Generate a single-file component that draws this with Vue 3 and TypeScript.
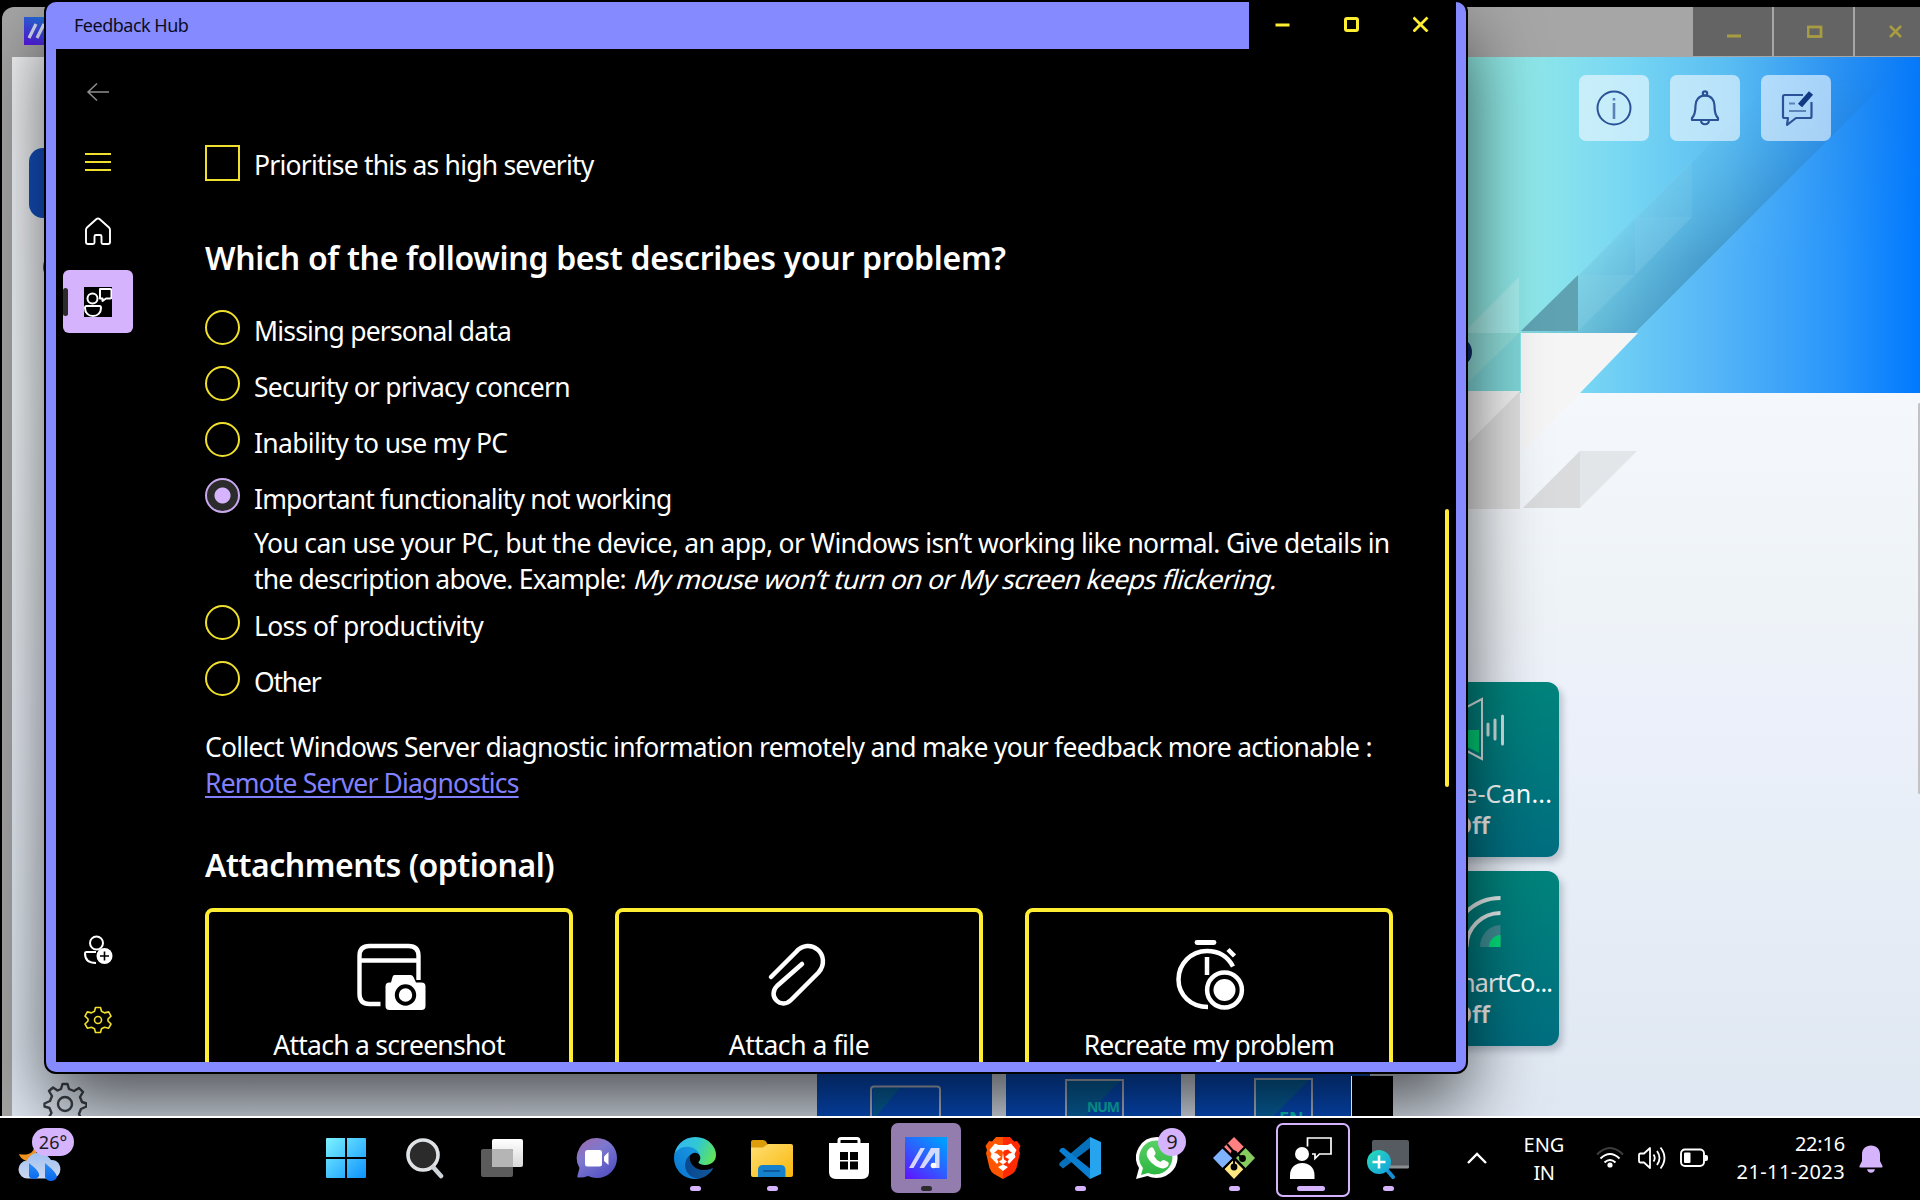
<script setup lang="ts">
import { ref } from 'vue'
import type { Directive } from 'vue'

interface Option {
  id: string
  label: string
  width: number
}

// Spreads the letters of a single line so that it takes the given width.
const vFit: Directive<HTMLElement, number> = {
  mounted(el, { value }) {
    const length = (el.textContent ?? '').length
    const natural = el.offsetWidth
    if (length > 0) el.style.letterSpacing = `${(value - natural) / length}px`
  },
}

const options: Option[] = [
  { id: 'data', label: 'Missing personal data', width: 257 },
  { id: 'security', label: 'Security or privacy concern', width: 316 },
  { id: 'inability', label: 'Inability to use my PC', width: 253 },
  { id: 'important', label: 'Important functionality not working', width: 418 },
  { id: 'loss', label: 'Loss of productivity', width: 229 },
  { id: 'other', label: 'Other', width: 67 },
]
const selected = ref('important')
</script>

<template>
  <div class="desktop">
    <!-- Background application -->
    <section class="app">
      <header class="app-bar">
        <svg class="app-logo" width="42" height="28" viewBox="0 0 42 28">
          <defs><linearGradient id="al" x1="0" y1="1" x2=".6" y2="0"><stop offset="0" stop-color="#5a14e6" /><stop offset="1" stop-color="#1d78d8" /></linearGradient></defs>
          <rect width="42" height="28" fill="url(#al)" />
          <path d="M5 21 12 7M13 21l7-14" stroke="#d6dcf5" stroke-width="3.2" />
        </svg>
        <div class="app-controls">
          <span><svg width="16" height="16" viewBox="0 0 16 16"><path d="M1 12h14" stroke="#a89c42" stroke-width="3" /></svg></span>
          <span><svg width="16" height="16" viewBox="0 0 16 16"><rect x="1" y="3" width="13" height="9.500" fill="none" stroke="#a89c42" stroke-width="2.800" /></svg></span>
          <span><svg width="16" height="16" viewBox="0 0 16 16"><path d="m2 2 11 11m0-11-11 11" stroke="#a89c42" stroke-width="2.600" /></svg></span>
        </div>
      </header>
      <div class="app-body">
        <svg class="art" viewBox="12 57 1908 1059" width="1908" height="1059">
          <defs>
            <linearGradient id="hero" gradientUnits="userSpaceOnUse" x1="1440" y1="0" x2="1920" y2="0">
              <stop offset="0" stop-color="#8ae0d4" /><stop offset=".2" stop-color="#8ee6ea" /><stop offset=".38" stop-color="#78d7f3" />
              <stop offset=".6" stop-color="#5abdf2" /><stop offset=".82" stop-color="#2c93f2" /><stop offset="1" stop-color="#0578fa" />
            </linearGradient>
            <linearGradient id="ray" gradientUnits="userSpaceOnUse" x1="1580" y1="0" x2="1920" y2="0">
              <stop offset="0" stop-color="#79d8f3" /><stop offset=".4" stop-color="#55b5f7" /><stop offset=".75" stop-color="#2a96fb" /><stop offset="1" stop-color="#0079ff" />
            </linearGradient>
            <linearGradient id="shade" gradientUnits="userSpaceOnUse" x1="1650" y1="170" x2="1724" y2="244">
              <stop offset="0" stop-color="#1a5a8c" stop-opacity="0" /><stop offset="1" stop-color="#1a5a8c" stop-opacity=".36" />
            </linearGradient>
            <linearGradient id="rise" gradientUnits="userSpaceOnUse" x1="0" y1="70" x2="0" y2="260">
              <stop offset="0" stop-color="#000" /><stop offset="1" stop-color="#fff" />
            </linearGradient>
            <mask id="rising" maskUnits="userSpaceOnUse" x="1400" y="57" width="520" height="336"><rect x="1400" y="57" width="520" height="336" fill="url(#rise)" /></mask>
          </defs>
          <rect x="1400" y="57" width="520" height="336" fill="url(#hero)" />
          <g mask="url(#rising)">
            <path d="M1521 333 1797 57h114L1635 333z" fill="url(#shade)" />
            <path d="M1635 333 1911 57h9v336h-340z" fill="url(#ray)" />
          </g>
          <path d="M1635 333h285v60h-340z" fill="url(#ray)" />
          <path d="M1519 277v56h-56z" fill="#fff" opacity=".2" />
          <path d="M1400 333h120v58h-120z" fill="#7fd6d8" />
          <path d="M1519 333l-60 58h-59v-58z" fill="#8edcd8" />
          <path d="M1578 275v56h-57z" fill="#5fa3b3" />
          <path d="M1578 275h57l-57 56z" fill="#8bd0e6" opacity=".34" />
          <path d="M1578 275l57-58v58z" fill="#8bd0e6" opacity=".12" />
          <path d="M1635 217h57l-57 58z" fill="#8bd0ea" opacity=".3" />
          <path d="M1692 160v57h-57z" fill="#8bd0ea" opacity=".18" />
          <path d="M1521 333h117l-58 60-59 60z" fill="#f5f5f5" />
          <path d="M1400 391h120v118h-120z" fill="#dedede" />
          <path d="M1400 391h120l-118 118z" fill="#f0f0f0" />
          <path d="M1523 508l57-57v57z" fill="#dadbdd" />
          <path d="M1580 451h57l-57 57z" fill="#e3e6e8" />
          <circle cx="1457" cy="352" r="15" fill="#0a2a66" />
          <rect x="1918" y="403" width="3" height="391" rx="1.500" fill="#c2c2c4" />
        </svg>
        <aside class="app-side">
          <div class="side-active"></div>
          <div class="side-dot"></div>
          <svg class="side-gear" width="44" height="44" viewBox="-22 -22 44 44" fill="none" stroke="#3d4147" stroke-width="2.400" stroke-linejoin="round">
            <path d="M-4-15-2.500-20h5L4-15l5 2 5-3 4 4-3 5 2 5 4.500 1.500v3L16 5l-2 5 2.500 5-4 3.500-5-3-4 2L2 21h-4l-1.500-4-4-2-5 3-4-4 3-5-2-5-5-1.500v-3L-15-3l2-5-3-5 4-3.500 4.500 3z" />
            <circle r="7" />
          </svg>
        </aside>
        <main class="app-main">
          <div class="hero">
            <span class="hero-btn"><svg width="40" height="40" viewBox="0 0 40 40" fill="none" stroke="#2b5296" stroke-width="2"><circle cx="20" cy="20" r="16.500" /><path d="M20 15v16M20 10v2.500" stroke="#5b83b8" stroke-width="2.600" /></svg></span>
            <span class="hero-btn"><svg width="40" height="40" viewBox="0 0 40 40" fill="none" stroke="#2b5296" stroke-width="2.200" stroke-linejoin="round"><circle cx="20" cy="5.500" r="2.200" /><path d="M20 7.500c-6 0-9.500 4.500-9.500 10 0 7-1 10-3.500 12.500V32h26v-2c-2.500-2.500-3.500-5.500-3.500-12.500 0-5.500-3.500-10-9.500-10zM16 32.500c.5 5 7.500 5 8 0" /></svg></span>
            <span class="hero-btn"><svg width="40" height="40" viewBox="0 0 40 40" fill="none" stroke="#2b5296" stroke-width="2.200" stroke-linejoin="round"><path d="M27 7H8.500Q7 7 7 8.500v20Q7 30 8.500 30H12l-1 7 9-7h14q1.500 0 1.500-1.500V14" /><path d="M13 15.500h6M13 23h17" stroke="#5b83b8" /><path d="M24 17.500 35 5" stroke="#123a84" stroke-width="5.500" /></svg></span>
          </div>
          <div class="tiles">
            <div class="tile">
              <svg width="175" height="95" viewBox="0 0 175 95"><path d="M50 35h14l34-18v60L64 59H50z" fill="none" stroke="#d9e6e6" stroke-width="2" /><path d="M64 48h31v23L66 56z" fill="#00cf78" /><path d="M104 42v11M111 38v19M118.500 34v28" stroke="#cfe0e2" stroke-width="3" stroke-linecap="round" /></svg>
              <span v-fit="142" class="tile-name">Noise-Can...</span>
              <b>Off</b>
            </div>
            <div class="tile">
              <svg width="175" height="95" viewBox="0 0 175 95"><path d="M116.500 76H96a20.500 22 0 0 1 20.500-22z" fill="#3f8e95" /><path d="M116.500 76H105a11.500 12 0 0 1 11.500-12z" fill="#00e07a" /><path d="M116.500 42a34 34 0 0 0-34 34M116.500 27a49 49 0 0 0-49 49" fill="none" stroke="#e4ecec" stroke-width="4" /></svg>
              <span v-fit="113" class="tile-name">SmartCo...</span>
              <b>Off</b>
            </div>
          </div>
          <div class="keys">
            <div class="key"><svg width="175" height="60" viewBox="0 0 175 60"><path d="M56 28h27L56 60z" fill="#0766a8" /><rect x="54" y="26.500" width="69" height="50" rx="3" fill="none" stroke="#bac0cc" stroke-width="2" /></svg></div>
            <div class="key"><svg width="175" height="60" viewBox="0 0 175 60"><path d="M60 20h55L60 76z" fill="#0766a8" /><rect x="60" y="20" width="57" height="60" fill="none" stroke="#bac0cc" stroke-width="2" /><text x="81" y="52" textLength="33" class="key-text">NUM</text><text x="81" y="68" class="key-text">LOCK</text></svg></div>
            <div class="key"><svg width="175" height="60" viewBox="0 0 175 60"><path d="M60 19h55L60 75z" fill="#0766a8" /><rect x="60" y="19" width="57" height="60" fill="none" stroke="#bac0cc" stroke-width="2" /><text x="84" y="65" class="key-text key-big">EN</text></svg></div>
          </div>
        </main>
      </div>
    </section>
    <div class="fragment"></div>

    <!-- Feedback Hub -->
    <section class="hub">
      <header class="hub-bar">
        <div class="hub-title"><span v-fit="114">Feedback Hub</span></div>
        <div class="hub-controls">
          <svg width="16" height="16" viewBox="0 0 16 16"><path d="M.5 9h14" stroke="#ffee32" stroke-width="3" /></svg>
          <svg width="16" height="16" viewBox="0 0 16 16"><rect x="1.500" y="2.500" width="12" height="12" rx="1.500" fill="none" stroke="#ffee32" stroke-width="3" /></svg>
          <svg width="16" height="16" viewBox="0 0 16 16"><path d="m.5 1.500 14 14m0-14-14 14" stroke="#ffee32" stroke-width="2.800" /></svg>
        </div>
      </header>
      <div class="hub-body">
        <nav class="nav">
          <span class="nav-item"><svg width="30" height="30" viewBox="0 0 30 30" fill="none" stroke="#8f8f8f" stroke-width="1.500"><path d="M26 15H5M14 6.500 5 15l9 8.500" /></svg></span>
          <span class="nav-item"><svg width="30" height="30" viewBox="0 0 30 30" stroke="#efe02e" stroke-width="1.800"><path d="M2 7h26M2 15h26M2 23h26" /></svg></span>
          <span class="nav-item nav-up"><svg width="30" height="30" viewBox="0 0 30 30" fill="none" stroke="#fff" stroke-width="1.900" stroke-linejoin="round"><path d="M3 14Q3 12.500 4 11.500L13.500 3Q15 1.800 16.500 3L26 11.500q1 1 1 2.500v12q0 2-2 2h-5q-1.500 0-1.500-1.500v-6Q18.500 19 17 19h-4q-1.500 0-1.500 1.500v6Q11.500 28 10 28H5q-2 0-2-2z" /></svg></span>
          <span class="nav-item nav-up"><span class="selected-box"><svg width="28" height="30" viewBox="0 0 28 30" fill="none" stroke="#fff" stroke-width="2"><rect width="28" height="30" fill="#000" stroke="none" /><circle cx="8.500" cy="11.500" r="5" /><path d="M2.500 19h13q1.500 0 1.500 2c0 5-3.500 8-8 8s-8-3-8-8q0-2 1.500-2zM16 2h10q1.500 0 1.500 1.500V10q0 1.500-1.500 1.500h-4L18.500 14v-2.500H16z" stroke-linejoin="round" /></svg></span></span>
          <span class="nav-gap"></span>
          <span class="nav-item"><svg width="30" height="30" viewBox="0 0 30 30" fill="none" stroke="#fff" stroke-width="2"><circle cx="13.500" cy="8" r="6.500" /><path d="M13 17H3.500Q2 17 2 18.500c0 6 4 9.500 11 9.500" /><circle cx="21.500" cy="21" r="8" fill="#fff" stroke="none" /><path d="M21.500 16.500v9M17 21h9" stroke="#000" stroke-width="1.600" /></svg></span>
          <span class="nav-item"><svg width="30" height="30" viewBox="-15 -15 30 30" fill="none" stroke="#efe02e" stroke-width="1.600" stroke-linejoin="round"><path d="M-2.500-12.500h5l1 3.700 3 1.700 4.200-1 2.300 4.200-3 2.900v2l3 3-2.300 4.200-4.200-1-3 1.600-1 3.700h-5l-1-3.700-3-1.600-4.200 1-2.300-4.200 3-3v-2l-3-2.900 2.300-4.200 4.200 1 3-1.700z" /><circle r="3.500" /></svg></span>
        </nav>
        <div class="content">
          <div class="check-row"><span class="checkbox"></span><span v-fit="340" class="check-label">Prioritise this as high severity</span></div>
          <h2><span v-fit="801">Which of the following best describes your problem?</span></h2>
          <div class="radios">
            <template v-for="option in options" :key="option.id">
              <div class="radio-row" @click="selected = option.id">
                <span class="radio" :class="{ on: selected === option.id }"></span>
                <span v-fit="option.width" class="radio-label">{{ option.label }}</span>
              </div>
              <div v-if="option.id === 'important'" class="details">
                <div><span v-fit="1136">You can use your PC, but the device, an app, or Windows isn’t working like normal. Give details in</span></div>
                <div><span v-fit="372">the description above. Example:</span><em v-fit="643">My mouse won’t turn on or My screen keeps flickering.</em></div>
              </div>
            </template>
          </div>
          <div class="collect">
            <div><span v-fit="1167">Collect Windows Server diagnostic information remotely and make your feedback more actionable :</span></div>
            <div><a v-fit="314">Remote Server Diagnostics</a></div>
          </div>
          <h2 class="attach-title"><span v-fit="349">Attachments (optional)</span></h2>
          <div class="cards">
            <div class="card">
              <svg width="80" height="80" viewBox="-5.500 0 80 80">
                <path d="M64 40V16Q64 6 54 6H15Q5 6 5 16V54Q5 64 15 64H26M5 20.500H64" fill="none" stroke="#fff" stroke-width="4.400" />
                <path d="M40 35h16q2 0 3 2l2.500 5.500H67q4 0 4 4V66q0 4-4 4H35q-4 0-4-4V46.500q0-4 4-4h1.500L38 37q.5-2 2-2z" fill="#fff" />
                <circle cx="51" cy="55" r="8.700" fill="#fff" stroke="#000" stroke-width="4" />
              </svg>
              <span v-fit="231">Attach a screenshot</span>
            </div>
            <div class="card">
              <svg width="80" height="80" viewBox="-1.500 0 80 80" fill="none" stroke="#fff" stroke-width="4.500" stroke-linecap="round"><path d="M10.500 37 35.500 12C42 4.500 51 4.500 57 9.500s8 15 1 23L30.500 60C26 64.500 20 64.500 16 60.500s-4-10 .5-14.500L41.500 24" /></svg>
              <span v-fit="140">Attach a file</span>
            </div>
            <div class="card">
              <svg width="80" height="80" viewBox="-4 0 80 80" fill="none" stroke="#fff" stroke-width="4.500">
                <path d="M24 2.500h17" stroke-linecap="round" stroke-width="4.800" />
                <path d="M35 67C18 67 5.500 55 5.500 39.500S18 11 34 11c12 0 21 6 26 15.500M34 17v18M55 9.500l6.500 6.500" />
                <circle cx="51.500" cy="50" r="21" fill="#000" stroke="none" /><circle cx="51.500" cy="50" r="17.400" /><circle cx="51.500" cy="50" r="11" fill="#fff" stroke="none" />
              </svg>
              <span v-fit="251">Recreate my problem</span>
            </div>
          </div>
        </div>
        <div class="scrollbar"></div>
      </div>
    </section>

    <!-- Taskbar -->
    <footer class="taskbar">
      <div class="weather">
        <svg width="44" height="38" viewBox="0 0 44 38">
          <defs><linearGradient id="cl" x1="0" y1="0" x2="0" y2="1"><stop offset="0" stop-color="#9ec0f2" /><stop offset="1" stop-color="#ccd8ee" /></linearGradient><linearGradient id="dr" x1="0" y1="0" x2="0" y2="1"><stop offset="0" stop-color="#2a8cf5" /><stop offset="1" stop-color="#0868f0" /></linearGradient></defs>
          <path d="M16 2c1 8-6 11-15 9 2 7 12 10 19 4z" fill="#f0921f" />
          <path d="M10 35.500a9 9 0 0 1-1-18C12 11 19 8 25 11c4 1 6 3 8 6 12-1 13 18 0 18.500z" fill="url(#cl)" />
          <path d="M11 20c6 5 11 9 10 13-2 4-9 4-10 0zM27 20c7 6 13 11 11.500 15-2 4-10 4-11.500-1z" fill="url(#dr)" />
        </svg>
        <span class="temp">26°</span>
      </div>
      <div class="tasks">
        <span class="task start"><svg width="42" height="42" viewBox="0 0 42 42"><defs><linearGradient id="wn" x1="0" y1="0" x2="1" y2="1"><stop offset="0" stop-color="#7cf3ff" /><stop offset="1" stop-color="#0d93ff" /></linearGradient></defs><path d="M2 1h18v19H1V2q0-1 1-1zM22 1h18q1 0 1 1v18H22zM1 22h19v19H2q-1 0-1-1zM22 22h19v18q0 1-1 1H22z" fill="url(#wn)" /></svg></span>
        <span class="task search"><svg width="42" height="42" viewBox="0 0 42 42"><circle cx="19" cy="18" r="15" fill="#2b2b2b" stroke="#dfe3e6" stroke-width="3.600" /><path d="m29 30 8 9" stroke="#cdd3d8" stroke-width="4.600" stroke-linecap="round" /></svg></span>
        <span class="task"><svg width="42" height="42" viewBox="0 0 42 42"><defs><linearGradient id="tv" x1="0" y1="0" x2="0" y2="1"><stop offset="0" stop-color="#fff" /><stop offset="1" stop-color="#d8d8d8" /></linearGradient></defs><rect x="11" y="2" width="31" height="28" rx="2" fill="url(#tv)" /><rect y="12" width="32" height="28" rx="2" fill="#5b5b5b" /><path d="M11 12h19q2 0 2 2v16H11z" fill="#b5b5b5" /></svg></span>
        <span class="task chat"><svg width="42" height="42" viewBox="0 0 42 42"><defs><linearGradient id="ch" x1="0" y1="0" x2=".7" y2="1"><stop offset="0" stop-color="#a06aa8" /><stop offset=".45" stop-color="#7d78cf" /><stop offset="1" stop-color="#5452c4" /></linearGradient></defs><path d="M21 1a20 20 0 0 1 0 40q-5 0-9-2-5 2-10 1.500-1-.5-.5-2L3.500 31A20 20 0 0 1 21 1z" fill="url(#ch)" /><rect x="9" y="13" width="17" height="16.500" rx="2.500" fill="#fff" /><path d="M28 19.500 32.500 15V28L28 24z" fill="#fff" /></svg></span>
        <span class="task edge">
          <svg width="42" height="42" viewBox="0 0 256 256">
            <defs>
              <linearGradient id="e1" x1=".2" y1="0" x2="1" y2="0"><stop offset="0" stop-color="#0a4a90" /><stop offset="1" stop-color="#12589c" /></linearGradient>
              <linearGradient id="e2" x1="1" y1="0" x2=".3" y2="1"><stop offset="0" stop-color="#1b9de2" /><stop offset="1" stop-color="#0a78d4" /></linearGradient>
              <linearGradient id="e3" x1="0" y1=".3" x2="1" y2=".6"><stop offset="0" stop-color="#35b8f4" /><stop offset=".5" stop-color="#30c8d2" /><stop offset="1" stop-color="#62e456" /></linearGradient>
            </defs>
            <path fill="url(#e1)" d="M231 190.500c-3.400 1.800-6.900 3.400-10.500 4.700-11.500 4.300-23.600 6.500-35.900 6.500-47.300 0-88.500-32.500-88.500-74.300.1-11.400 6.400-21.900 16.400-27.300-42.800 1.800-53.800 46.400-53.800 72.500 0 74 68.100 81.400 82.800 81.400 7.900 0 19.800-2.300 27-4.600l1.300-.4c27.600-9.500 51-28.100 66.600-52.800 1.200-1.900.6-4.300-1.200-5.500-1.300-.7-2.900-.8-4.200-.2z" />
            <path fill="url(#e2)" d="M105.700 241.400c-8.900-5.500-16.600-12.800-22.700-21.300-26.300-36-18.400-86.500 17.600-112.800 3.800-2.700 7.700-5.200 11.900-7.200 3.100-1.500 8.400-4.100 15.500-4 10.100.1 19.600 4.900 25.700 13 4 5.400 6.300 11.900 6.400 18.700 0-.2 24.500-79.600-80-79.600-43.900 0-80 41.700-80 78.200-.2 19.300 4 38.500 12.100 56 27.600 58.800 94.800 87.600 156.400 67.100-21.100 6.600-44.100 3.700-62.900-8.100z" />
            <path fill="url(#e3)" d="M152.330 148.860c-.81 1.050-3.300 2.500-3.300 5.660 0 2.610 1.700 5.120 4.720 7.230 14.380 10 41.490 8.680 41.560 8.680a59.560 59.560 0 0 0 30.270-8.350A61.380 61.380 0 0 0 255.860 109.200c.26-22.410-8-37.310-11.340-43.910C223.380 23.920 177.750 0 128 0A128 128 0 0 0 0 126.200c.48-36.540 36.800-66.050 80-66.050 3.500 0 23.460.34 42 10.070 16.340 8.580 24.900 18.940 30.850 29.210 6.180 10.670 7.280 24.150 7.280 29.520s-2.740 13.350-7.800 19.910z" />
          </svg><i class="dot"></i></span>
        <span class="task"><svg width="42" height="42" viewBox="0 0 42 42"><defs><linearGradient id="fo" x1="0" y1="0" x2="1" y2="1"><stop offset="0" stop-color="#ffdf73" /><stop offset="1" stop-color="#f9b70b" /></linearGradient></defs><path d="M0 5q0-2 2-2h10q2 0 3 1.500L17 8v6H0z" fill="#dd9c0a" /><path d="M0 10.500h12L17 7h23q2 0 2 2v29q0 2-2 2H2q-2 0-2-2z" fill="url(#fo)" /><path d="M7 40v-7q0-5 5-5h17.500q5 0 5 5v7z" fill="#1580cc" /><path d="M13 34h15" stroke="#0c5a9c" stroke-width="2" stroke-linecap="round" /></svg><i class="dot"></i></span>
        <span class="task"><svg width="42" height="42" viewBox="0 0 42 42"><path d="M11 7V3.500Q11 1.500 13 1.500h16q2 0 2 2V7" fill="none" stroke="#fff" stroke-width="3" /><path d="M1 6h40v29q0 7-7 7H8q-7 0-7-7z" fill="#fff" /><path d="M12 15h8v8h-8zM22 15h8v8h-8zM12 24.500h8v8h-8zM22 24.500h8v8h-8z" fill="#000" /></svg></span>
        <span class="task active"><svg width="42" height="42" viewBox="0 0 42 42"><defs><linearGradient id="ma" x1="0" y1="1" x2=".8" y2="0"><stop offset="0" stop-color="#6210ff" /><stop offset=".55" stop-color="#2d60ff" /><stop offset="1" stop-color="#009cff" /></linearGradient></defs><rect width="42" height="42" fill="url(#ma)" /><path d="M4 31 15.500 11H20L8.500 31zM14.500 31 26 11h8.500v20H30V15.500L19 31z" fill="#e4e4fb" opacity=".92" /><circle cx="28.500" cy="28.500" r="2.800" fill="#fff" /></svg><i class="dot dark"></i></span>
        <span class="task"><svg width="42" height="42" viewBox="0 0 42 42"><defs><linearGradient id="br"><stop offset=".5" stop-color="#ff5500" /><stop offset=".51" stop-color="#ff2a00" /></linearGradient></defs><path d="M14 0h14l4 4.500 3-.5 3.500 5-1.500 4 1 3-3.500 15Q33 35 30 37l-9 5-9-5q-3-2-4.500-6L4 16l1-3-1.500-4L7 4l3 .5z" fill="url(#br)" /><path d="M13 6.500 16.500 8h9L29 6.500l5.500 6.500-2 4 1 3-6.500 7-1.500-2 1.500-3-4-2 4-3.500 3-.5-4-3.500-4 1-1 2 1 7 3 2-4 3-4-3 3-2 1-7-1-2-4-1-4 3.500 3 .5 4 3.500-4 2 1.500 3-1.500 2-6.500-7 1-3-2-4zM16 30l5-2.500 5 2.500-5 4z" fill="#fff" /></svg></span>
        <span class="task"><svg width="42" height="42" viewBox="0 0 42 42"><path d="m0 28 4 3.500L31 11V0L1 25.500Q0 27 0 28z" fill="#0870ba" /><path d="M0 14q2-4 5-3l26 20.500V42z" fill="#0a7ed0" /><path d="M31 0 42 5v32l-11 5z" fill="#27a4ee" /></svg><i class="dot"></i></span>
        <span class="task"><svg width="42" height="42" viewBox="0 0 42 42"><defs><linearGradient id="wa" x1="0" y1="0" x2="0" y2="1"><stop offset="0" stop-color="#5bd066" /><stop offset="1" stop-color="#2bb640" /></linearGradient></defs><path d="M21 0a21 20.500 0 1 1-9.500 39L0 42l3-11A21 20.500 0 0 1 21 0z" fill="#fff" /><path d="M21 3.500A17.500 17 0 1 1 12 36l-7 2 2-7A17.500 17 0 0 1 21 3.500z" fill="url(#wa)" /><path d="M14 11q2-1.500 3.500.5l2 4q.5 1.500-1.500 3.500 2 4 6.500 6 2-2.500 3.500-2l4 2q1.500 1 0 4-3 4-9 1.500-8-3-12-11-1.500-5 3-8.500z" fill="#fff" /></svg><em class="badge">9</em></span>
        <span class="task"><svg width="42" height="42" viewBox="0 0 42 42"><path d="m0 21 9.500-9.500L20 21 9.500 31z" fill="#80b3ff" /><path d="m42 21-9.500 10L23 21l9.500-10z" fill="#87cc5e" /><path d="m21 42-9.500-10L21 22l9.500 10z" fill="#ffe680" /><path d="M21 0 11 10l10 10 10-10z" fill="#ff8080" /><path d="m14 7 7 8v15M21 14l8 7M10 10.500 31.500 32M31.500 10.500 10 32" fill="none" stroke="#000" stroke-width="2" /><circle cx="21" cy="17" r="3.400" /><circle cx="21" cy="30" r="3.400" /><circle cx="29.500" cy="21.500" r="3.400" /></svg><i class="dot"></i></span>
        <span class="task outlined"><svg width="42" height="42" viewBox="0 0 42 42"><circle cx="12" cy="17" r="7" fill="#fff" /><path d="M0 42V38C0 22 24.500 22 24.500 38v4z" fill="#fff" /><path d="M17.500 9.500V1h23.500v16H29.500L25 21.500V17h-3" fill="none" stroke="#fff" stroke-width="1.700" /></svg><i class="dot wide"></i></span>
        <span class="task"><svg width="42" height="42" viewBox="0 0 42 42"><defs><linearGradient id="mg" x1="0" y1="0" x2="1" y2="1"><stop offset="0" stop-color="#26ddb8" /><stop offset="1" stop-color="#169fe0" /></linearGradient></defs><rect x="5" y="3" width="37" height="28" rx="2" fill="#555b60" /><path d="M5 28.500h37V30q0 1.500-1.500 1.500H5z" fill="#8b8f92" /><path d="m19 32 7 8" stroke="#1590d4" stroke-width="4" stroke-linecap="round" /><circle cx="12" cy="25" r="12" fill="url(#mg)" /><path d="M12 18.500v13M5.500 25h13" stroke="#fff" stroke-width="2.600" /></svg><i class="dot"></i></span>
      </div>
      <div class="tray">
        <svg class="chev" width="22" height="14" viewBox="0 0 22 14"><path d="m2 12 9-9 9 9" fill="none" stroke="#fff" stroke-width="2.400" /></svg>
        <div class="lang"><span v-fit="41">ENG</span><span v-fit="21">IN</span></div>
        <svg class="wifi" width="28" height="24" viewBox="0 0 28 24" fill="none" stroke="#fff" stroke-width="2"><path d="M1 8.500Q14-4.500 27 8.500" stroke="#3c3c3c" /><path d="M4.500 12.500q9.500-9 19 0M8.500 16.500q5.500-5 11 0" /><circle cx="14" cy="19" r="2.600" fill="#fff" stroke="none" /></svg>
        <svg class="vol" width="28" height="24" viewBox="0 0 28 24" fill="none" stroke="#fff" stroke-width="1.800" stroke-linejoin="round"><path d="M1 9q0-1.500 1.500-1.500H6l6-5.500v20L6 16.500H2.500Q1 16.500 1 15zM15.500 8.500q2.500 3.500 0 7M19 5q5 7 0 14M22.500 1.500q8 10.500 0 21" /></svg>
        <svg class="bat" width="28" height="20" viewBox="0 0 28 20"><rect x="1" y="1.500" width="23" height="16.500" rx="4" fill="none" stroke="#fff" stroke-width="1.900" /><rect x="4" y="4.500" width="6.500" height="10.500" rx="1" fill="#fff" /><path d="M25 7h1q2 0 2 2v2q0 2-2 2h-1z" fill="#fff" /></svg>
        <div class="clock"><span v-fit="50">22:16</span><span v-fit="108">21-11-2023</span></div>
        <svg class="bell" width="24" height="28" viewBox="0 0 24 28"><path d="M12 .5c5.500 0 9 3.500 9 9V16l2.500 5q.5 1.500-1 1.500h-21Q0 22.500.5 21L3 16V9.500C3 4 6.500.5 12 .5zM8 24.200h8q-1 3.500-4 3.500t-4-3.500z" fill="#d6b4fd" /></svg>
      </div>
    </footer>
  </div>
</template>

<style>
body {
  background: #000;
  overflow: hidden;
}
</style>

<style scoped>
.desktop {
  position: relative;
  width: 1920px;
  height: 1200px;
  overflow: hidden;
  background: #000;
  color: #fff;
  font-family: 'Noto Sans', 'Open Sans', sans-serif;
  font-size: 26.500px;
  line-height: 36px;
}
.desktop * {
  box-sizing: border-box;
}
svg {
  display: block;
  flex: none;
}
span,
a,
em {
  white-space: nowrap;
}

/* background application */
.app {
  position: absolute;
  left: 2px;
  top: 7px;
  width: 1918px;
  height: 1109px;
  display: flex;
  flex-direction: column;
  overflow: hidden;
  border-radius: 12px 0 0 0;
  background: #a6a6a6;
}
.app-bar {
  height: 50px;
  flex: none;
  display: flex;
  justify-content: space-between;
}
.app-logo {
  margin: 10px 0 0 22px;
}
.app-controls {
  display: flex;
  gap: 2px;
  height: 49px;
  margin-right: -14px;
}
.app-controls span {
  width: 79px;
  padding-left: 2px;
  background: #646464;
  display: flex;
  align-items: center;
  justify-content: center;
}
.app-body {
  position: relative;
  flex: 1;
  min-height: 0;
  margin-left: 10px;
  display: flex;
  background: linear-gradient(#f2f4f6 0, #f4f8fc 336px, #eef3f7 545px, #ecf0fa 650px, #e7eef6 800px, #dfe7f2 100%);
}
.art {
  position: absolute;
  inset: 0;
}
.app-side {
  position: relative;
  width: 80px;
  display: flex;
  flex-direction: column;
  padding-top: 91px;
}
.side-active {
  width: 120px;
  height: 70px;
  margin-left: 17px;
  border-radius: 14px;
  background: #1450c0;
  flex: none;
}
.side-dot {
  width: 26px;
  height: 26px;
  margin: 36px 0 0 31px;
  border-radius: 50%;
  background: #555;
  flex: none;
}
.side-gear {
  margin: auto 0 -10px 31px;
}
.app-main {
  position: relative;
  flex: 1;
  min-width: 0;
}
.hero {
  height: 336px;
  padding: 18px 89px 0 0;
  display: flex;
  justify-content: flex-end;
  gap: 21px;
}
.hero-btn {
  width: 70px;
  height: 66px;
  border-radius: 7px;
  background: rgba(242, 248, 255, 0.62);
  display: flex;
  align-items: center;
  justify-content: center;
}
.tiles {
  display: flex;
  flex-direction: column;
  gap: 14px;
  padding: 289px 0 0 1292px;
}
.tile {
  width: 175px;
  height: 175px;
  border-radius: 12px;
  background: linear-gradient(#00847c, #006e80);
  box-shadow: 4px 5px 6px rgba(60, 70, 90, 0.25);
  display: flex;
  flex-direction: column;
  align-items: center;
  font-size: 25px;
  line-height: 32px;
}
.tile-name {
  align-self: flex-end;
  margin-right: 7px;
}
.tile b {
  font-weight: 600;
  font-size: 24px;
  color: #f4f4f4;
}
.keys {
  display: flex;
  gap: 14px;
  padding: 14px 0 0 725px;
}
.key {
  width: 175px;
  height: 60px;
  background: #0750c8;
  flex: none;
}
.key-text {
  fill: #08ccc0;
  font: 700 14px 'Noto Sans', sans-serif;
}
.key-big {
  font-size: 18px;
}
.fragment {
  position: absolute;
  z-index: 3;
  left: 1351px;
  top: 1076px;
  width: 42px;
  height: 40px;
  background: #000;
  border-left: 1px solid #ffee32;
}

/* feedback window */
.hub {
  position: absolute;
  z-index: 2;
  left: 46px;
  top: 2px;
  width: 1420px;
  height: 1070px;
  padding: 0 10px 10px;
  border-radius: 10px;
  background: #858aff;
  display: flex;
  flex-direction: column;
  box-shadow: 0 0 0 2px #000, 0 34px 74px rgba(0, 0, 0, 0.66);
}
.hub-bar {
  height: 47px;
  flex: none;
  display: flex;
  justify-content: space-between;
}
.hub-title {
  padding: 5px 0 0 17px;
  color: #0c0c20;
  font-size: 18px;
}
.hub-title span {
  margin-left: 1px;
}
.hub-controls {
  width: 207px;
  background: #000;
  display: flex;
  gap: 53px;
  padding: 14px 0 0 26px;
}
.hub-body {
  flex: 1;
  min-height: 0;
  background: #000;
  display: flex;
  overflow: hidden;
}
.nav {
  width: 84px;
  padding: 8px 0 7px;
  display: flex;
  flex-direction: column;
}
.nav-item {
  height: 70px;
  display: flex;
  align-items: center;
  justify-content: center;
}
.nav-up {
  padding-bottom: 2px;
}
.nav-gap {
  flex: 1;
}
.selected-box {
  position: relative;
  width: 70px;
  height: 63px;
  border-radius: 6px;
  background: #d6b4fd;
  display: flex;
  align-items: center;
  justify-content: center;
}
.selected-box svg {
  margin-top: 2px;
}
.selected-box::before {
  content: '';
  position: absolute;
  left: 0;
  top: 18px;
  width: 5px;
  height: 28px;
  border-radius: 3px;
  background: #2b2b2b;
}
.content {
  flex: 1;
  padding: 96px 0 0 65px;
}
.check-row {
  display: flex;
  align-items: center;
  gap: 14px;
  height: 36px;
}
.check-label {
  margin-top: 4px;
}
.checkbox {
  width: 35px;
  height: 36px;
  border: 2px solid #efe02e;
}
h2 {
  margin: 55px 0 19px;
  font-size: 32px;
  line-height: 44px;
  font-weight: 600;
}
h2 span {
  display: inline-block;
}
.radio-row {
  height: 56px;
  display: flex;
  align-items: center;
  gap: 14px;
}
.radio {
  position: relative;
  width: 35px;
  height: 35px;
  border: 2px solid #efe02e;
  border-radius: 50%;
}
.radio.on {
  border-color: #c9a9ee;
  background: radial-gradient(circle, #d6b4fd 7.500px, #2b2b2b 8.500px);
}
.radio-label {
  margin-top: 7px;
}
.details {
  height: 71px;
  padding-left: 49px;
  margin-top: 2px;
  margin-bottom: -2px;
}
.details em {
  display: inline-block;
  margin-left: 9px;
  font-style: normal;
  transform: skewX(-16deg);
}
.collect {
  margin-top: 23px;
}
.collect a {
  color: #8080ff;
  text-decoration: underline;
  text-decoration-thickness: 1.500px;
  text-underline-offset: 3px;
}
h2.attach-title {
  margin: 42px 0 21px;
}
.cards {
  display: flex;
  gap: 42px;
}
.card {
  width: 368px;
  height: 190px;
  border: 4px solid #ffee32;
  border-radius: 8px;
  display: flex;
  flex-direction: column;
  align-items: center;
  padding-top: 28px;
  flex: none;
}
.card svg {
  margin-bottom: 7px;
}
.scrollbar {
  width: 4px;
  height: 278px;
  margin: 460px 7px 0 0;
  border-radius: 2px;
  background: #ffee32;
  flex: none;
}

/* taskbar */
.taskbar {
  position: absolute;
  z-index: 4;
  left: 0;
  bottom: 0;
  width: 1920px;
  height: 84px;
  border-top: 2px solid #fff;
  background: #000;
  display: flex;
}
.weather {
  position: relative;
  width: 307px;
  padding: 25px 0 0 18px;
}
.temp {
  position: absolute;
  left: 32px;
  top: 10px;
  width: 42px;
  height: 28px;
  border-radius: 14px;
  background: #d6b4fd;
  color: #1c1c1c;
  font-size: 18px;
  line-height: 28px;
  text-align: center;
}
.tasks {
  display: flex;
  width: 1120px;
}
.task {
  position: relative;
  width: 77px;
  height: 80px;
  display: flex;
  align-items: center;
  justify-content: center;
  flex: none;
}
.task svg {
  position: relative;
}
.search {
  margin-left: 2px;
}
.chat {
  margin-left: 18px;
}
.edge {
  margin-left: 21px;
}
.dot {
  position: absolute;
  left: 34px;
  top: 68px;
  width: 11px;
  height: 5px;
  border-radius: 3px;
  background: #d6b4fd;
}
.dot.dark {
  background: #2b2b2b;
}
.dot.wide {
  left: 25px;
  width: 28px;
}
.active::before,
.outlined::before {
  content: '';
  position: absolute;
  left: 4px;
  top: 5px;
  width: 70px;
  height: 70px;
  border-radius: 7px;
  background: #927dae;
}
.outlined::before {
  background: none;
  border: 2px solid #d6b4fd;
}
.badge {
  position: absolute;
  left: 40px;
  top: 10px;
  width: 28px;
  height: 28px;
  border-radius: 50%;
  background: #d6b4fd;
  color: #1c1c1c;
  font: normal 20px/27px 'Noto Sans', sans-serif;
  text-align: center;
}
.tray {
  flex: 1;
  display: flex;
  align-items: flex-start;
  font-size: 20px;
  line-height: 28px;
}
.chev {
  margin: 33px 0 0 39px;
}
.lang {
  width: 60px;
  margin: 13px 0 0 26px;
  display: flex;
  flex-direction: column;
  align-items: center;
}
.wifi {
  margin: 28px 0 0 22px;
}
.vol {
  margin: 28px 0 0 14px;
}
.bat {
  margin: 30px 0 0 14px;
}
.clock {
  width: 137px;
  margin-top: 12px;
  display: flex;
  flex-direction: column;
  align-items: flex-end;
}
.bell {
  margin: 27px 0 0 14px;
}
</style>
